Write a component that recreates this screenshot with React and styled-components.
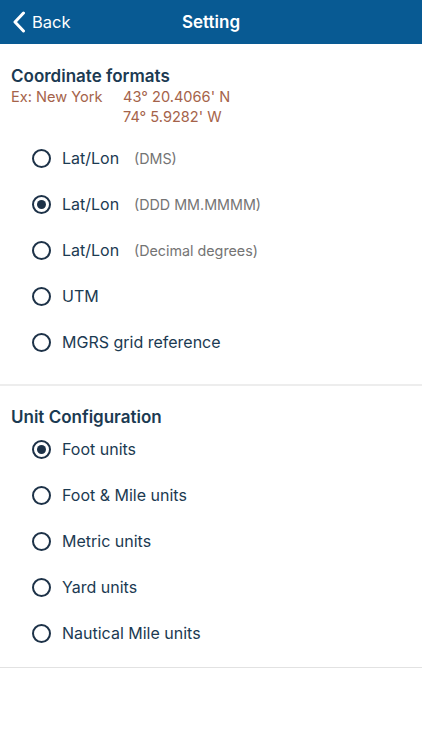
import React, { useState } from "react";
import styled, { createGlobalStyle } from "styled-components";

const GlobalStyle = createGlobalStyle`
  html, body {
    margin: 0;
    padding: 0;
    background: #ffffff;
  }
  body {
    font-family: Inter, "Liberation Sans", sans-serif;
    -webkit-font-smoothing: antialiased;
  }
`;

const Page = styled.div`
  width: 422px;
  min-height: 750px;
  background: #fff;
`;

const Header = styled.header`
  height: 44px;
  background: #085a93;
  color: #fff;
  display: grid;
  grid-template-columns: 1fr auto 1fr;
  align-items: center;
`;

const BackButton = styled.button`
  justify-self: start;
  display: flex;
  align-items: center;
  gap: 6px;
  background: none;
  border: none;
  color: #fff;
  font: 400 16.5px Inter, "Liberation Sans", sans-serif;
  padding: 0 0 0 12px;
  cursor: pointer;
`;

const Title = styled.h1`
  margin: 0;
  font-size: 17px;
  font-weight: 600;
`;

const Section = styled.section`
  padding: ${(p) => p.$top}px 0 ${(p) => p.$bottom}px;
  border-bottom: ${(p) => p.$border};
`;

const SectionTitle = styled.h2`
  margin: 0;
  padding-left: 11px;
  font-size: 17px;
  line-height: 22px;
  font-weight: 600;
  color: #1b3a52;
`;

const Example = styled.div`
  display: grid;
  grid-template-columns: 112px auto;
  padding-left: 11px;
  font-size: 14.6px;
  line-height: 20px;
  color: #a5634a;
  margin-bottom: 8px;
`;

const List = styled.div`
  display: flex;
  flex-direction: column;
  margin-top: ${(p) => p.$shift || 0}px;
`;

const Row = styled.label`
  height: 46px;
  display: flex;
  align-items: center;
  padding-left: 32px;
  cursor: pointer;
`;

const Radio = styled.span`
  width: 19px;
  height: 19px;
  box-sizing: border-box;
  border: 2px solid #1d3248;
  border-radius: 50%;
  display: flex;
  align-items: center;
  justify-content: center;
  margin-right: 11px;
  &::after {
    content: "";
    width: 9px;
    height: 9px;
    border-radius: 50%;
    background: #1d3248;
    display: ${(p) => (p.$on ? "block" : "none")};
  }
`;

const Label = styled.span`
  font-size: 16px;
  color: #1b3a52;
  width: ${(p) => (p.$fixed ? "72px" : "auto")};
`;

const Sub = styled.span`
  font-size: 14.3px;
  color: #747474;
`;

const coords = [
  { label: "Lat/Lon", sub: "(DMS)" },
  { label: "Lat/Lon", sub: "(DDD MM.MMMM)" },
  { label: "Lat/Lon", sub: "(Decimal degrees)" },
  { label: "UTM" },
  { label: "MGRS grid reference" },
];

const units = [
  "Foot units",
  "Foot & Mile units",
  "Metric units",
  "Yard units",
  "Nautical Mile units",
];

export default function App() {
  const [coord, setCoord] = useState(1);
  const [unit, setUnit] = useState(0);

  return (
    <Page>
      <GlobalStyle />
      <Header>
        <BackButton>
          <svg width="14" height="22" viewBox="0 0 14 22">
            <path
              d="M11.5 2 L3 11 L11.5 20"
              fill="none"
              stroke="#fff"
              strokeWidth="3"
              strokeLinecap="round"
              strokeLinejoin="round"
            />
          </svg>
          Back
        </BackButton>
        <Title>Setting</Title>
        <span />
      </Header>

      <Section $top={21} $bottom={19} $border="2px solid #ededed">
        <SectionTitle>Coordinate formats</SectionTitle>
        <Example>
          <span>Ex: New York</span>
          <span>43° 20.4066' N</span>
          <span />
          <span>74° 5.9282' W</span>
        </Example>
        <List>
          {coords.map((c, i) => (
            <Row key={i} onClick={() => setCoord(i)}>
              <Radio $on={coord === i} />
              <Label $fixed={!!c.sub}>{c.label}</Label>
              {c.sub && <Sub>{c.sub}</Sub>}
            </Row>
          ))}
        </List>
      </Section>

      <Section $top={20} $bottom={11} $border="1px solid #e2e2e2">
        <SectionTitle>Unit Configuration</SectionTitle>
        <List $shift={-2}>
          {units.map((u, i) => (
            <Row key={u} onClick={() => setUnit(i)}>
              <Radio $on={unit === i} />
              <Label>{u}</Label>
            </Row>
          ))}
        </List>
      </Section>
    </Page>
  );
}
